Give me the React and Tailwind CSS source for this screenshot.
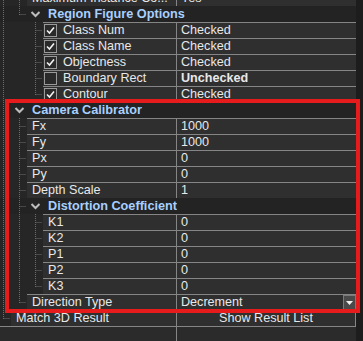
import React from 'react';

const LINE = '#6c6c6c';

function Guides({ cols }) {
  const width = 11 + 16 * (cols.length - 1);
  return (
    <svg width={width} height={16} className="shrink-0 block">
      {cols.map((c, i) => {
        const x = 16 * i - 5 + 8 + 0.5;
        if (c === 'chev') {
          return (
            <polyline
              key={i}
              points={`${x - 4},6 ${x},10 ${x + 4},6`}
              fill="none"
              stroke="#bdbdbd"
              strokeWidth="2"
            />
          );
        }
        if (c === 'none') return null;
        return (
          <g key={i} stroke={LINE} strokeWidth="1" strokeDasharray="1 1">
            <line x1={x} y1={0} x2={x} y2={c === 'half' ? 9 : 16} />
            {c !== 'full' && <line x1={x + 1} y1={8.5} x2={x + 6} y2={8.5} />}
          </g>
        );
      })}
    </svg>
  );
}

function CheckBox({ checked }) {
  return (
    <div className="w-[13px] h-[13px] border border-[#9a9a9a] bg-[#2a2a2a] ml-px mr-[6px] shrink-0 flex items-center justify-center">
      {checked && (
        <svg width="9" height="9" viewBox="0 0 9 9">
          <polyline points="1,4.5 3.5,7 8,1.5" fill="none" stroke="#f2f2f2" strokeWidth="1.6" />
        </svg>
      )}
    </div>
  );
}

function Category({ cols, label }) {
  return (
    <div className="flex h-[16px] bg-[#232323]">
      <Guides cols={cols} />
      <div className="pl-[5px] font-bold text-[#a8d0ff] text-[12.7px] leading-[16px] whitespace-nowrap">
        {label}
      </div>
    </div>
  );
}

function Prop({ cols, label, value, check, bold, dropdown, button }) {
  return (
    <div className="flex h-[16px]">
      <Guides cols={cols} />
      <div className="flex flex-1 border-t border-[#858585] bg-[#2f2f2f] min-w-0">
        <div className="flex flex-1 items-center min-w-0 overflow-hidden">
          {check !== undefined && <CheckBox checked={check} />}
          <span className={`${check !== undefined ? '' : 'pl-[5px]'} whitespace-nowrap leading-[15px] pb-px`}>
            {label}
          </span>
        </div>
        <div className="w-px bg-[#858585]" />
        {button ? (
          <div className="w-[179px] border-r border-[#858585] text-center leading-[15px] pb-px">
            {button}
          </div>
        ) : (
          <div className="w-[179px] flex items-center justify-between">
            <span className={`pl-[4px] leading-[15px] pb-px whitespace-nowrap ${bold ? 'font-bold' : ''}`}>
              {value}
            </span>
            {dropdown && (
              <div className="w-[13px] h-[15px] bg-[#4a4a4a] border border-[#7a7a7a] flex items-center justify-center">
                <svg width="7" height="4" viewBox="0 0 7 4">
                  <polygon points="0,0 7,0 3.5,4" fill="#f0f0f0" />
                </svg>
              </div>
            )}
          </div>
        )}
      </div>
    </div>
  );
}

export default function App() {
  const regionItems = [
    { label: 'Class Num', check: true, value: 'Checked' },
    { label: 'Class Name', check: true, value: 'Checked' },
    { label: 'Objectness', check: true, value: 'Checked' },
    { label: 'Boundary Rect', check: false, value: 'Unchecked', bold: true },
    { label: 'Contour', check: true, value: 'Checked' },
  ];
  const camItems = [
    ['Fx', '1000'],
    ['Fy', '1000'],
    ['Px', '0'],
    ['Py', '0'],
    ['Depth Scale', '1'],
  ];
  const distItems = ['K1', 'K2', 'P1', 'P2', 'K3'];

  return (
    <div
      className="relative w-[363px] h-[341px] overflow-hidden bg-[#262626] text-[#e8e8e8] text-[12.6px] flex"
      style={{ fontFamily: '"Liberation Sans", Arial, sans-serif' }}
    >
      <div className="flex-1 flex flex-col -mt-[10px]">
        <Prop cols={['full', 'tee']} label="Maximum Instance Co..." value="Yes" />
        <Category cols={['full', 'half', 'chev']} label="Region Figure Options" />
        {regionItems.map((r, i) => (
          <Prop
            key={r.label}
            cols={['full', 'none', i === regionItems.length - 1 ? 'half' : 'tee']}
            label={r.label}
            check={r.check}
            value={r.value}
            bold={r.bold}
          />
        ))}
        <Category cols={['full', 'chev']} label="Camera Calibrator" />
        {camItems.map(([l, v]) => (
          <Prop key={l} cols={['full', 'tee']} label={l} value={v} />
        ))}
        <Category cols={['full', 'tee', 'chev']} label="Distortion Coefficient" />
        {distItems.map((l, i) => (
          <Prop
            key={l}
            cols={['full', 'full', i === distItems.length - 1 ? 'half' : 'tee']}
            label={l}
            value="0"
          />
        ))}
        <Prop cols={['full', 'half']} label="Direction Type" value="Decrement" dropdown />
        <Prop cols={['half']} label="Match 3D Result" button="Show Result List" />
        <div className="flex flex-1 border-t border-[#858585] bg-[#2b2b2b]">
          <div className="flex-1" />
          <div className="w-px bg-[#858585]" />
          <div className="w-[179px]" />
        </div>
      </div>
      <div className="w-[7px] bg-[#1d1d1d]" />

      <div className="absolute left-[5px] top-[99px] w-[355px] h-[214px] border-[4px] border-[#e61c1c] pointer-events-none" />
    </div>
  );
}
